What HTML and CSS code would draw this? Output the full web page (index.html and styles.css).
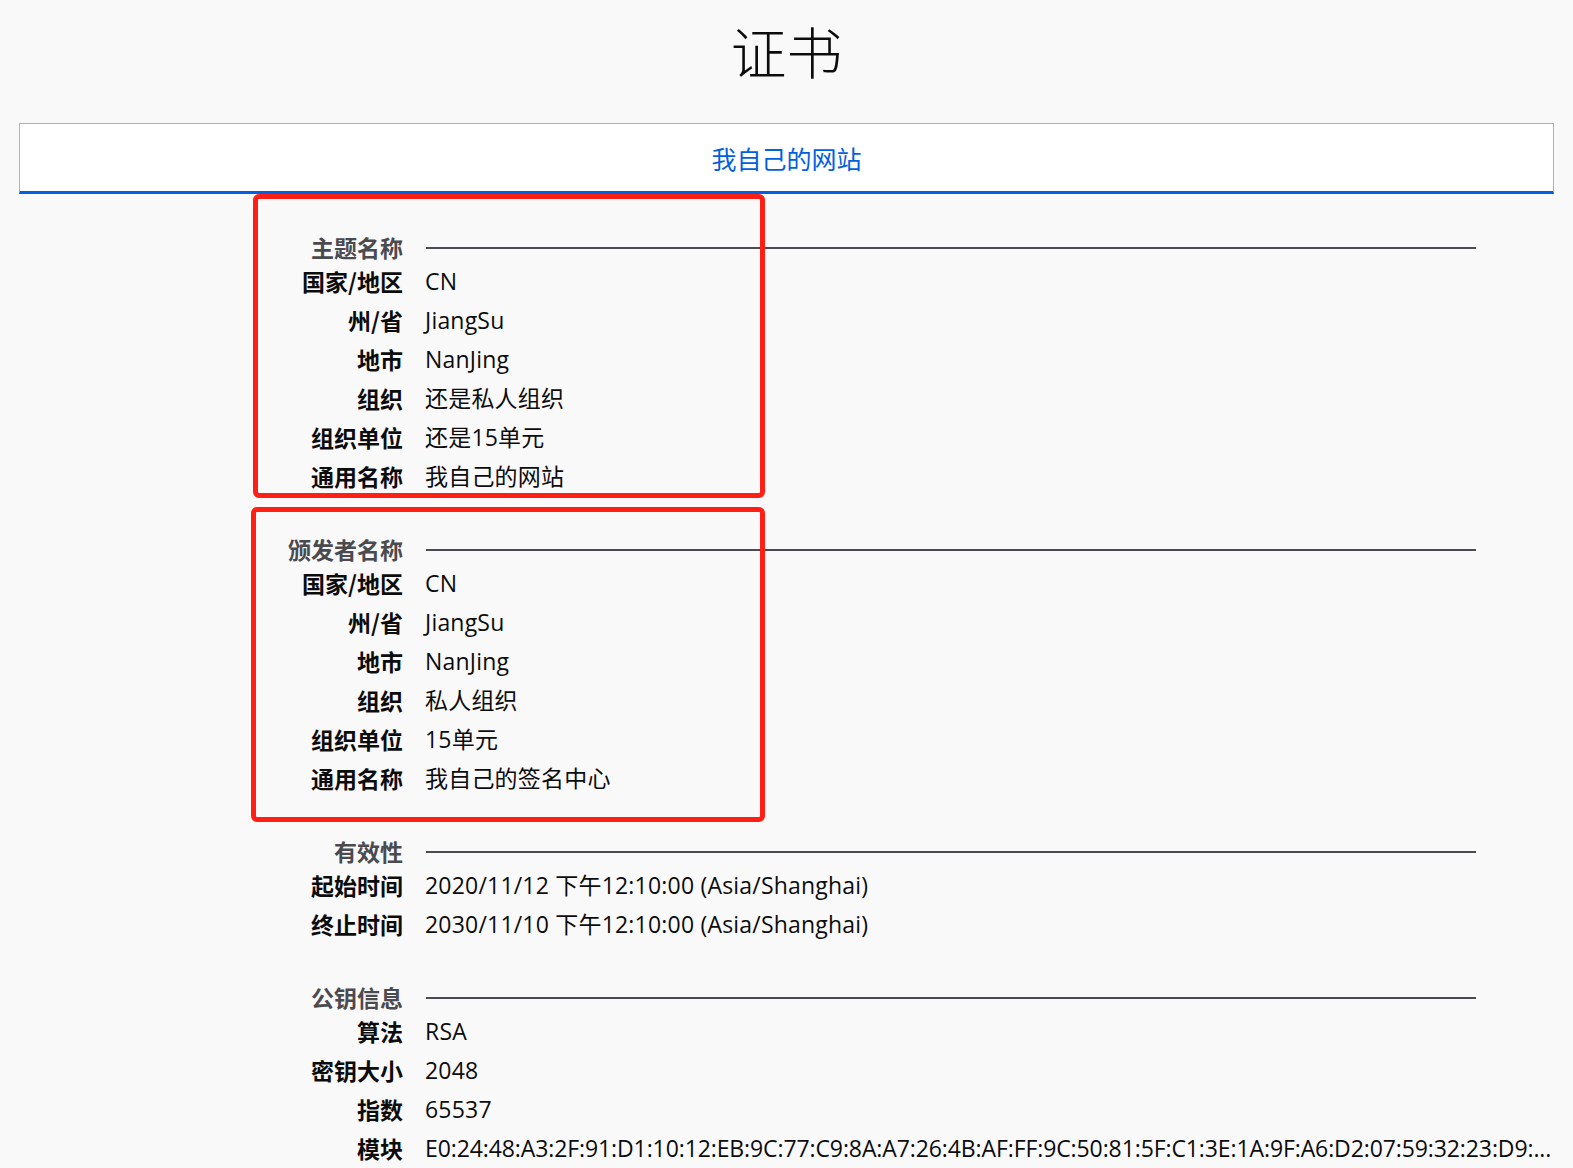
FILE: index.html
```html
<!DOCTYPE html>
<html lang="zh-CN">
<head>
<meta charset="utf-8">
<title>证书</title>
<link rel="stylesheet" href="styles.css">
</head>
<body>
<h1 class="title">证书</h1>
<div class="tabs">
  <div class="tab">我自己的网站</div>
</div>
<main class="info">
  <section class="group">
    <div class="head-label">主题名称</div><div class="head-line"></div>
    <div class="label">国家/地区</div><div class="value">CN</div>
    <div class="label">州/省</div><div class="value">JiangSu</div>
    <div class="label">地市</div><div class="value">NanJing</div>
    <div class="label">组织</div><div class="value">还是私人组织</div>
    <div class="label">组织单位</div><div class="value">还是15单元</div>
    <div class="label">通用名称</div><div class="value">我自己的网站</div>
  </section>
  <section class="group">
    <div class="head-label">颁发者名称</div><div class="head-line"></div>
    <div class="label">国家/地区</div><div class="value">CN</div>
    <div class="label">州/省</div><div class="value">JiangSu</div>
    <div class="label">地市</div><div class="value">NanJing</div>
    <div class="label">组织</div><div class="value">私人组织</div>
    <div class="label">组织单位</div><div class="value">15单元</div>
    <div class="label">通用名称</div><div class="value">我自己的签名中心</div>
  </section>
  <section class="group">
    <div class="head-label">有效性</div><div class="head-line"></div>
    <div class="label">起始时间</div><div class="value">2020/11/12 下午12:10:00 (Asia/Shanghai)</div>
    <div class="label">终止时间</div><div class="value">2030/11/10 下午12:10:00 (Asia/Shanghai)</div>
  </section>
  <section class="group">
    <div class="head-label">公钥信息</div><div class="head-line"></div>
    <div class="label">算法</div><div class="value">RSA</div>
    <div class="label">密钥大小</div><div class="value">2048</div>
    <div class="label">指数</div><div class="value">65537</div>
    <div class="label">模块</div><div class="value modulus">E0:24:48:A3:2F:91:D1:10:12:EB:9C:77:C9:8A:A7:26:4B:AF:FF:9C:50:81:5F:C1:3E:1A:9F:A6:D2:07:59:32:23:D9:...</div>
  </section>
</main>
<div class="mark mark-1"></div>
<div class="mark mark-2"></div>
</body>
</html>
```
FILE: styles.css
```css
html {
  overflow: hidden;
}
body {
  margin: 0;
  background: #f9f9fa;
  color: #0c0c0d;
  font-family: "Open Sans", "Noto Sans CJK SC", sans-serif;
  position: relative;
  min-height: 1168px;
}
.title {
  margin: 0 0 45px;
  padding-top: 22px;
  font-family: "Noto Sans CJK SC", sans-serif;
  font-size: 56px;
  line-height: 56px;
  font-weight: 300;
  text-align: center;
  color: #0c0c0d;
}
.tabs {
  margin: 0 19px;
  background: #fff;
  border: 1px solid #b1b1b3;
  border-bottom: 3px solid #0060df;
  display: flex;
  justify-content: center;
}
.tab {
  padding: 22px 0 20px;
  font-family: "Noto Sans CJK SC", sans-serif;
  font-size: 25px;
  line-height: 25px;
  color: #0060df;
}
.info {
  padding: 39px 21px 0 0;
  display: flex;
  flex-direction: column;
  gap: 39px;
}
.group {
  display: grid;
  grid-template-columns: 403px 1fr;
  column-gap: 22px;
  font-size: 23px;
}
.head-label {
  text-align: right;
  font-weight: bold;
  color: #4a4a4f;
  line-height: 29px;
  height: 29px;
  font-family: "Noto Sans CJK SC", sans-serif;
}
.head-line {
  align-self: center;
  height: 2px;
  background: #4a4a4f;
  margin: 1px 76px 0 1px;
}
.label {
  text-align: right;
  font-weight: bold;
  line-height: 39px;
  font-family: "Noto Sans CJK SC", sans-serif;
}
.value {
  line-height: 39px;
  white-space: nowrap;
  min-width: 0;
  letter-spacing: 0.2px;
}
.modulus {
  overflow: hidden;
  letter-spacing: -0.1px;
}
.mark {
  position: absolute;
  border: 5px solid #ff1f14;
  border-radius: 6px;
  box-sizing: border-box;
}
.mark-1 {
  left: 253px;
  top: 194px;
  width: 512px;
  height: 304px;
}
.mark-2 {
  left: 251px;
  top: 507px;
  width: 514px;
  height: 315px;
}
```
